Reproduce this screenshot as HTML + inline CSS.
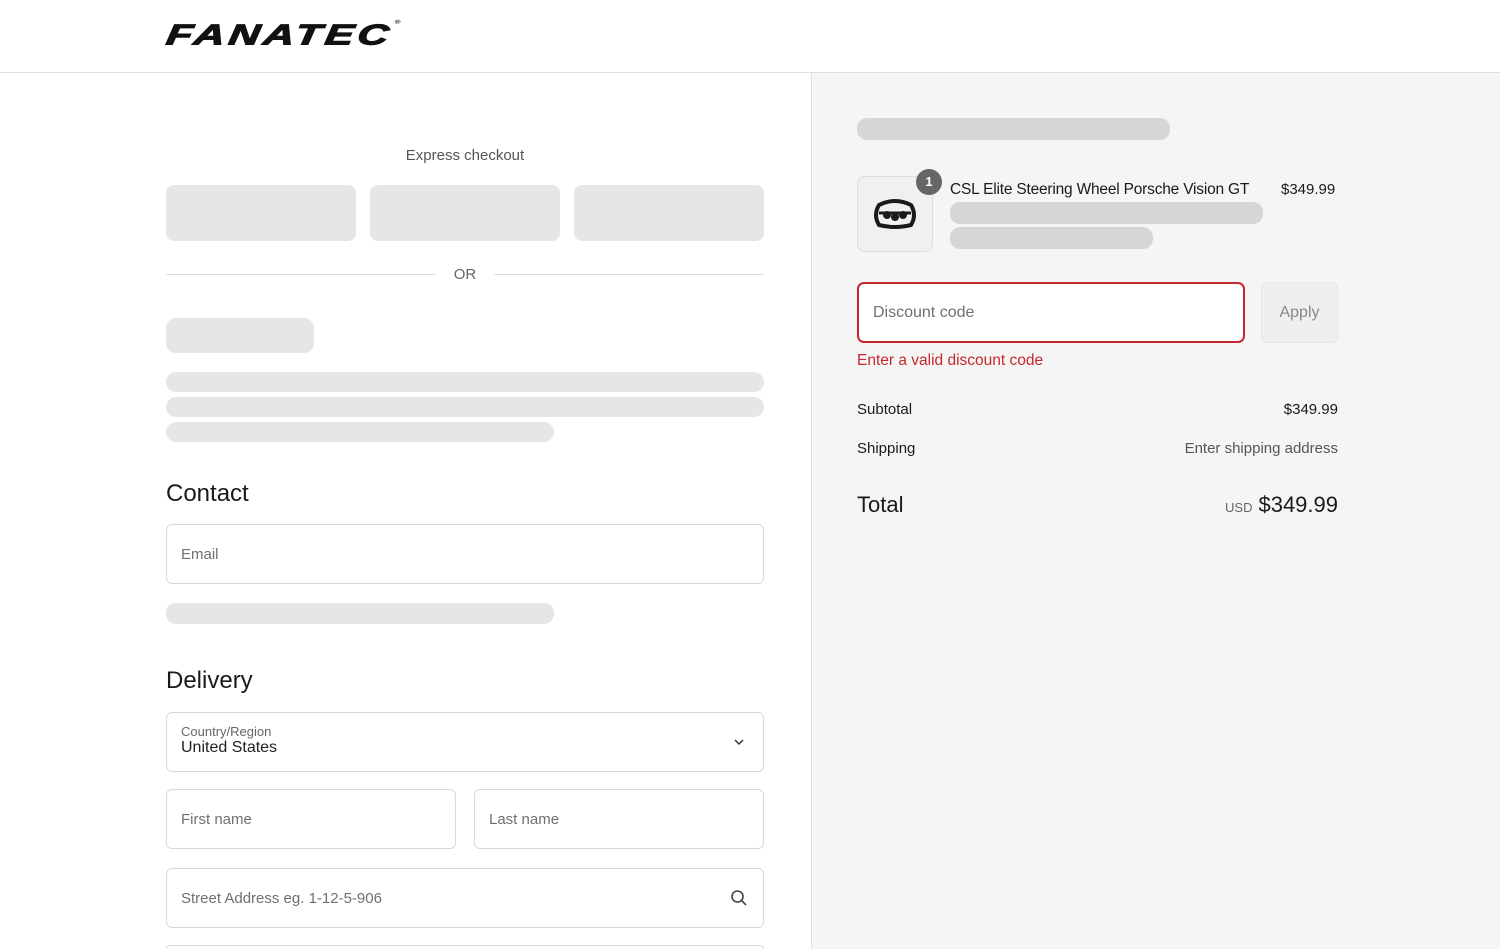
<!DOCTYPE html>
<html><head><style>
*{box-sizing:border-box;margin:0;padding:0}
html,body{width:1500px;height:949px;overflow:hidden}
body{font-family:"Liberation Sans",sans-serif;background:#fff;color:#1a1a1a;position:relative}
.a{position:absolute}
.sk{position:absolute;background:#e6e6e6;border-radius:10px}
.skr{position:absolute;background:#d6d6d6;border-radius:10px}
.in{position:absolute;border:1px solid #d9d9d9;border-radius:6px;background:#fff;font-size:15px;color:#707070;padding-left:14px;display:flex;align-items:center}
h2{position:absolute;font-size:24px;font-weight:normal;color:#1a1a1a}
.t{position:absolute;font-size:15px}
</style></head><body>
<div class="a" style="left:169px;top:20px;font-size:32px;font-weight:900;font-style:italic;letter-spacing:3px;transform:scale(1.33,0.9) skewX(-6deg);transform-origin:left top;color:#111;line-height:1;-webkit-text-stroke:1.2px #111">FANATEC<sup style="font-size:6px;vertical-align:top;-webkit-text-stroke:0">®</sup></div>
<div class="a" style="left:0;top:72px;width:1500px;height:1px;background:#dedede"></div>
<div class="a" style="left:811px;top:73px;width:689px;height:876px;background:#f5f5f5;border-left:1px solid #e0e0e0"></div>

<div class="t" style="left:166px;width:598px;top:147px;text-align:center;color:#555;font-size:15px">Express checkout</div>
<div class="sk" style="left:166px;top:185px;width:190px;height:56px;border-radius:8px"></div>
<div class="sk" style="left:370px;top:185px;width:190px;height:56px;border-radius:8px"></div>
<div class="sk" style="left:574px;top:185px;width:190px;height:56px;border-radius:8px"></div>
<div class="a" style="left:166px;top:274px;width:270px;height:1px;background:#ddd"></div>
<div class="a" style="left:494px;top:274px;width:270px;height:1px;background:#ddd"></div>
<div class="t" style="left:436px;width:58px;top:266px;text-align:center;color:#666">OR</div>
<div class="sk" style="left:166px;top:318px;width:148px;height:35px"></div>
<div class="sk" style="left:166px;top:372px;width:598px;height:20px"></div>
<div class="sk" style="left:166px;top:397px;width:598px;height:20px"></div>
<div class="sk" style="left:166px;top:422px;width:388px;height:20px"></div>
<h2 style="left:166px;top:480px">Contact</h2>
<div class="in" style="left:166px;top:524px;width:598px;height:60px">Email</div>
<div class="sk" style="left:166px;top:603px;width:388px;height:21px"></div>
<h2 style="left:166px;top:667px">Delivery</h2>
<div class="in" style="left:166px;top:712px;width:598px;height:60px;display:block;padding-top:11px">
<div style="font-size:13px;color:#666">Country/Region</div><div style="font-size:16px;color:#222">United States</div>
<svg class="a" style="left:566px;top:24px" width="12" height="10" viewBox="0 0 12 10"><path d="M2 3l4 4 4-4" stroke="#333" stroke-width="1.5" fill="none"/></svg></div>
<div class="in" style="left:166px;top:789px;width:290px;height:60px">First name</div>
<div class="in" style="left:474px;top:789px;width:290px;height:60px">Last name</div>
<div class="in" style="left:166px;top:868px;width:598px;height:60px">Street Address eg. 1-12-5-906
<svg class="a" style="left:563px;top:20px" width="18" height="18" viewBox="0 0 18 18"><circle cx="7.5" cy="7.5" r="5.5" stroke="#444" stroke-width="1.6" fill="none"/><path d="M11.5 11.5l4.5 4.5" stroke="#444" stroke-width="1.6"/></svg></div>
<div class="in" style="left:166px;top:945px;width:598px;height:4px;border-bottom:none;border-radius:6px 6px 0 0"></div>

<div class="skr" style="left:857px;top:118px;width:313px;height:22px"></div>
<div class="a" style="left:857px;top:176px;width:76px;height:76px;border:1px solid #ddd;border-radius:8px;background:#f0f0f0"></div>
<svg class="a" style="left:874px;top:198px" width="42" height="32" viewBox="0 0 42 32"><path d="M5 7Q21-1 37 7Q43 17 37 27Q21 31 5 27Q-1 17 5 7Z" fill="none" stroke="#1a1a1a" stroke-width="4"/><path d="M5 15H37" stroke="#1a1a1a" stroke-width="3"/><circle cx="13" cy="17" r="4" fill="#1a1a1a"/><circle cx="21" cy="19" r="4" fill="#1a1a1a"/><circle cx="29" cy="17" r="4" fill="#1a1a1a"/></svg>
<div class="a" style="left:916px;top:169px;width:26px;height:26px;border-radius:13px;background:#666;color:#fff;font-size:13px;font-weight:bold;text-align:center;line-height:26px">1</div>
<div class="t" style="left:950px;top:181px;font-size:15.5px;letter-spacing:-0.2px">CSL Elite Steering Wheel Porsche Vision GT</div>
<div class="t" style="left:1281px;top:181px;font-size:15px">$349.99</div>
<div class="skr" style="left:950px;top:202px;width:313px;height:22px"></div>
<div class="skr" style="left:950px;top:227px;width:203px;height:22px"></div>
<div class="in" style="left:857px;top:282px;width:388px;height:61px;border:2px solid #c4282d;border-radius:7px;color:#707070;font-size:16px">Discount code</div>
<div class="a" style="left:1261px;top:282px;width:77px;height:61px;border:1px solid #e6e6e6;border-radius:6px;background:#efefef;color:#888;font-size:16px;text-align:center;line-height:59px">Apply</div>
<div class="t" style="left:857px;top:352px;color:#c4282d;font-size:15.5px">Enter a valid discount code</div>
<div class="t" style="left:857px;top:401px">Subtotal</div>
<div class="t" style="left:1200px;width:138px;text-align:right;top:401px">$349.99</div>
<div class="t" style="left:857px;top:440px">Shipping</div>
<div class="t" style="left:1120px;width:218px;text-align:right;top:440px;color:#555">Enter shipping address</div>
<div class="t" style="left:857px;top:492px;font-size:22px">Total</div>
<div class="t" style="left:1100px;width:238px;text-align:right;top:492px;font-size:22px"><span style="font-size:13px;color:#666;margin-right:6px">USD</span>$349.99</div>
</body></html>
